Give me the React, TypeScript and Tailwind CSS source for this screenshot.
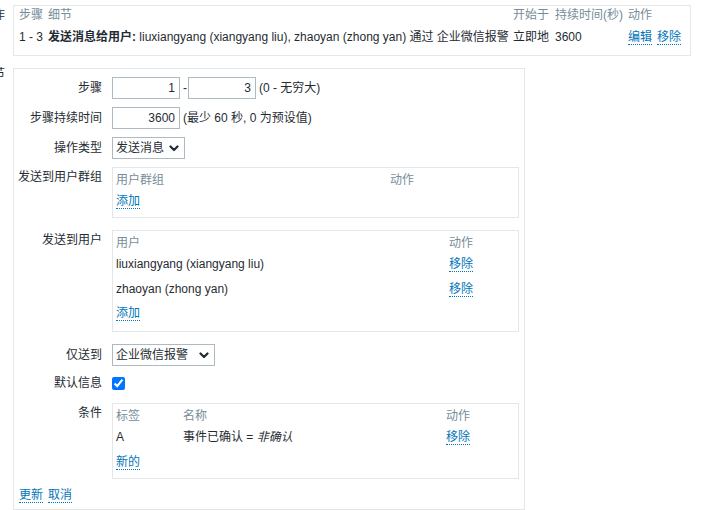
import React from "react";

const link = "text-[#0275b8] border-b border-dotted border-[#0275b8]";
const head = "text-[#768d99]";

function Chevron() {
  return (
    <svg width="10" height="7" viewBox="0 0 10 7" className="shrink-0">
      <path d="M1.5 1.5 L5 5 L8.5 1.5" fill="none" stroke="#1f2c33" strokeWidth="2.2" strokeLinecap="round" strokeLinejoin="round" />
    </svg>
  );
}

function Select({ text, w }: { text: string; w: string }) {
  return (
    <div className={`${w} h-[22px] border border-[#acbbc2] flex items-center justify-between pl-[3px] pr-[5px] bg-white`}>
      <span className="whitespace-nowrap">{text}</span>
      <Chevron />
    </div>
  );
}

function NumInput({ value }: { value: string }) {
  return (
    <input
      readOnly
      value={value}
      className="w-[68px] h-[22px] border border-[#acbbc2] text-right pr-[4px] outline-none text-[12px] text-[#1f2c33] bg-white"
    />
  );
}

function Label({ children, top }: { children: React.ReactNode; top?: boolean }) {
  return (
    <div className={`flex justify-end whitespace-nowrap ${top ? "pt-[2px]" : "items-center"}`}>
      {children}
    </div>
  );
}

export default function App() {
  return (
    <div className="w-[707px] h-[510px] overflow-hidden bg-white text-[12px] leading-[16px] text-[#1f2c33] font-['Liberation_Sans','Noto_Sans_CJK_SC',sans-serif]">
      {/* top block */}
      <div className="flex pt-[5px]">
        <div className="w-[13px] shrink-0 flex justify-end pr-[8px] pt-[4px]">
          <span className="whitespace-nowrap leading-[12px]">操作</span>
        </div>
        <div className="w-[678px] h-[51px] shrink-0 border border-[#e3e7ea] pl-[5px] pt-[1px]">
          <div className={`flex h-[16px] whitespace-nowrap ${head}`}>
            <div className="w-[29px]">步骤</div>
            <div className="w-[465px]">细节</div>
            <div className="w-[42px]">开始于</div>
            <div className="w-[73px]">持续时间(秒)</div>
            <div className="flex-1">动作</div>
          </div>
          <div className="flex h-[16px] mt-[6px] whitespace-nowrap">
            <div className="w-[29px]">1 - 3</div>
            <div className="w-[465px]">
              <span className="font-bold">发送消息给用户:</span> liuxiangyang (xiangyang liu), zhaoyan (zhong yan) 通过 企业微信报警
            </div>
            <div className="w-[42px]">立即地</div>
            <div className="w-[73px]">3600</div>
            <div className="flex-1 flex gap-[5px]">
              <span className={link}>编辑</span>
              <span className={link}>移除</span>
            </div>
          </div>
        </div>
      </div>

      {/* operation details */}
      <div className="flex mt-[12px]">
        <div className="w-[13px] shrink-0 flex justify-end pr-[8px]">
          <span className="whitespace-nowrap leading-[12px]">操作细节</span>
        </div>
        <div className="w-[512px] h-[442px] shrink-0 border border-[#e3e7ea] pl-[5px] pr-[5px] pt-[8px]">
          <div className="grid grid-cols-[83px_1fr] gap-x-[10px]">
            {/* steps */}
            <Label>步骤</Label>
            <div className="flex items-center whitespace-nowrap">
              <NumInput value="1" />
              <span className="ml-[3px] mr-[1px]">-</span>
              <NumInput value="3" />
              <span className="ml-[3px]">(0 - 无穷大)</span>
            </div>

            {/* duration */}
            <div className="col-span-2 h-[8px]" />
            <Label>步骤持续时间</Label>
            <div className="flex items-center whitespace-nowrap">
              <NumInput value="3600" />
              <span className="ml-[3px]">(最少 60 秒, 0 为预设值)</span>
            </div>

            {/* op type */}
            <div className="col-span-2 h-[8px]" />
            <Label>操作类型</Label>
            <div>
              <Select text="发送消息" w="w-[73px]" />
            </div>

            {/* user groups */}
            <div className="col-span-2 h-[8px]" />
            <Label top>发送到用户群组</Label>
            <div className="h-[51px] border border-[#e3e7ea] pl-[3px] pt-[4px]">
              <div className={`flex h-[16px] ${head}`}>
                <div className="w-[274px]">用户群组</div>
                <div>动作</div>
              </div>
              <div className="h-[16px] mt-[5px]">
                <span className={link}>添加</span>
              </div>
            </div>

            {/* users */}
            <div className="col-span-2 h-[12px]" />
            <Label top>发送到用户</Label>
            <div className="h-[102px] border border-[#e3e7ea] pl-[3px] pt-[4px]">
              <div className={`flex h-[16px] ${head}`}>
                <div className="w-[333px]">用户</div>
                <div>动作</div>
              </div>
              <div className="flex h-[16px] mt-[5px]">
                <div className="w-[333px]">liuxiangyang (xiangyang liu)</div>
                <div><span className={link}>移除</span></div>
              </div>
              <div className="flex h-[16px] mt-[9px]">
                <div className="w-[333px]">zhaoyan (zhong yan)</div>
                <div><span className={link}>移除</span></div>
              </div>
              <div className="h-[16px] mt-[8px]">
                <span className={link}>添加</span>
              </div>
            </div>

            {/* only send to */}
            <div className="col-span-2 h-[12px]" />
            <Label>仅送到</Label>
            <div>
              <Select text="企业微信报警" w="w-[103px]" />
            </div>

            {/* default message */}
            <div className="col-span-2 h-[8px]" />
            <Label>默认信息</Label>
            <div className="h-[18px] flex items-center">
              <input type="checkbox" defaultChecked className="m-0 w-[13px] h-[13px] accent-[#0075ff]" />
            </div>

            {/* conditions */}
            <div className="col-span-2 h-[11px]" />
            <Label top>条件</Label>
            <div className="h-[76px] border border-[#e3e7ea] pl-[3px] pt-[4px]">
              <div className={`flex h-[16px] ${head}`}>
                <div className="w-[67px]">标签</div>
                <div className="w-[263px]">名称</div>
                <div>动作</div>
              </div>
              <div className="flex h-[16px] mt-[5px]">
                <div className="w-[67px]">A</div>
                <div className="w-[263px] whitespace-nowrap">
                  事件已确认 = <span className="italic">非确认</span>
                </div>
                <div><span className={link}>移除</span></div>
              </div>
              <div className="h-[16px] mt-[9px]">
                <span className={link}>新的</span>
              </div>
            </div>
          </div>

          <div className="flex gap-[5px] mt-[8px] h-[16px]">
            <span className={link}>更新</span>
            <span className={link}>取消</span>
          </div>
        </div>
      </div>
    </div>
  );
}
